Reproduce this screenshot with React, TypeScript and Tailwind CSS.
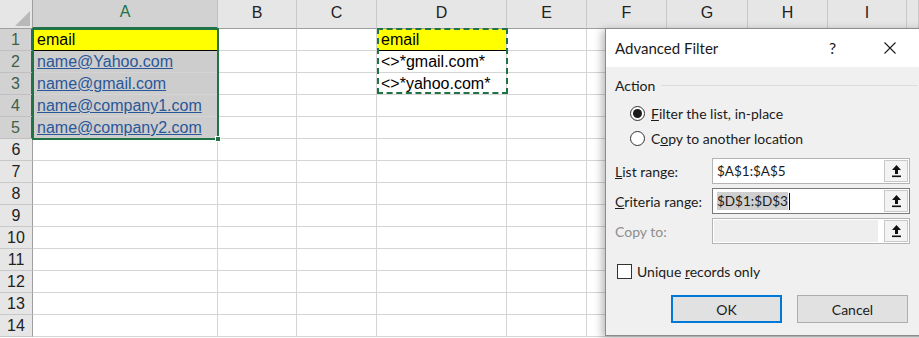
import React from "react";

const columns = [
  { name: "A", w: 185 },
  { name: "B", w: 79 },
  { name: "C", w: 80 },
  { name: "D", w: 130 },
  { name: "E", w: 80 },
  { name: "F", w: 80 },
  { name: "G", w: 81 },
  { name: "H", w: 80 },
  { name: "I", w: 79 },
  { name: "", w: 12 },
];

const rows = Array.from({ length: 14 }, (_, i) => i + 1);

type Cell = { text: string; link?: boolean; yellow?: boolean };

const cells: Record<string, Cell> = {
  A1: { text: "email", yellow: true },
  A2: { text: "name@Yahoo.com", link: true },
  A3: { text: "name@gmail.com", link: true },
  A4: { text: "name@company1.com", link: true },
  A5: { text: "name@company2.com", link: true },
  D1: { text: "email", yellow: true },
  D2: { text: "<>*gmail.com*" },
  D3: { text: "<>*yahoo.com*" },
};

function UpArrow() {
  return (
    <svg width="11" height="14" viewBox="0 0 11 14">
      <path d="M5.5 1 L10 6 L7 6 L7 10 L4 10 L4 6 L1 6 Z" fill="#111" />
      <rect x="1" y="11.5" width="9" height="1.6" fill="#111" />
    </svg>
  );
}

function RangeField({
  value,
  selected,
  disabled,
  dark,
}: {
  value?: string;
  selected?: boolean;
  disabled?: boolean;
  dark?: boolean;
}) {
  return (
    <div
      className={
        "flex h-[26px] w-[198px] border bg-white " +
        (dark ? "border-[#7a7a7a]" : "border-[#b4b4b4]")
      }
    >
      <div
        className={
          "flex flex-1 items-center pl-[4px] text-[13.5px] text-[#1b1b1b] " +
          (disabled ? "m-[1px] mr-[5px] bg-[#eeeeee]" : "")
        }
      >
        {selected ? (
          <>
            <span className="bg-[#cfcfcf] leading-[18px]">{value}</span>
            <span className="ml-[1px] h-[17px] w-px bg-black" />
          </>
        ) : (
          value
        )}
      </div>
      <div className="m-px flex w-[24px] items-center justify-center border border-[#c9c9c9] bg-[#f3f3f3]">
        <UpArrow />
      </div>
    </div>
  );
}

function AdvancedFilter() {
  return (
    <div
      className="absolute left-[605px] top-[28px] h-[308px] w-[330px] border border-[#8c8c8c] bg-[#f0f0f0] shadow-[-3px_2px_8px_rgba(0,0,0,0.28)]"
      style={{ fontFamily: '"Segoe UI", Lato, "Noto Sans", sans-serif' }}
    >
      <div className="flex h-[38px] items-center bg-white pl-[9px] text-[#1b1b1b]">
        <span className="w-[214px] text-[15px]">Advanced Filter</span>
        <span className="w-[55px] text-[16px]">?</span>
        <svg width="12" height="12" viewBox="0 0 12 12">
          <path d="M0.5 0.5 L11.5 11.5 M11.5 0.5 L0.5 11.5" stroke="#1b1b1b" strokeWidth="1.1" />
        </svg>
      </div>

      <div className="flex flex-col pl-[9px] text-[14px] text-[#1b1b1b]">
        <div className="mt-[8px] flex h-[20px] items-center pr-[16px]">
          <span>Action</span>
          <div className="ml-[6px] h-px flex-1 bg-[#dcdcdc]" />
        </div>

        <div className="mt-[8px] flex h-[20px] items-center pl-[15px]">
          <span className="flex h-[15px] w-[15px] items-center justify-center rounded-full border border-[#333] bg-white">
            <span className="h-[9px] w-[9px] rounded-full bg-[#1b1b1b]" />
          </span>
          <span className="ml-[6px]">
            <span className="underline">F</span>ilter the list, in-place
          </span>
        </div>

        <div className="mt-[5px] flex h-[20px] items-center pl-[15px]">
          <span className="h-[15px] w-[15px] rounded-full border border-[#333] bg-white" />
          <span className="ml-[6px]">
            C<span className="underline">o</span>py to another location
          </span>
        </div>

        <div className="mt-[10px] flex flex-col gap-[4px]">
          <div className="flex items-center">
            <span className="w-[97px]">
              <span className="underline">L</span>ist range:
            </span>
            <RangeField value="$A$1:$A$5" />
          </div>
          <div className="flex items-center">
            <span className="w-[97px]">
              <span className="underline">C</span>riteria range:
            </span>
            <RangeField value="$D$1:$D$3" selected dark />
          </div>
          <div className="flex items-center">
            <span className="w-[97px] text-[#8d8d8d]">Copy to:</span>
            <RangeField disabled />
          </div>
        </div>

        <div className="mt-[17px] flex h-[20px] items-center pl-[2px]">
          <span className="h-[15px] w-[15px] border border-[#333] bg-white" />
          <span className="ml-[5px]">
            Unique <span className="underline">r</span>ecords only
          </span>
        </div>

        <div className="mt-[14px] flex gap-[15px] pl-[56px]">
          <div className="flex h-[28px] w-[111px] items-center justify-center border-2 border-[#0078d7] bg-[#e1e1e1]">
            OK
          </div>
          <div className="flex h-[28px] w-[111px] items-center justify-center border border-[#adadad] bg-[#e1e1e1]">
            Cancel
          </div>
        </div>
      </div>
    </div>
  );
}

export default function App() {
  const gridCols = "grid-cols-[33px_185px_79px_80px_130px_80px_80px_81px_80px_79px_12px]";

  return (
    <div
      className="relative h-[338px] w-[919px] overflow-hidden bg-white"
      style={{ fontFamily: '"Liberation Sans", Arial, sans-serif' }}
    >
      <div className={"grid grid-rows-[29px_repeat(14,22px)] " + gridCols}>
        {/* corner */}
        <div className="relative border-b border-r border-[#9f9f9f] bg-[#e6e6e6]">
          <svg className="absolute bottom-[2px] right-[2px]" width="15" height="15" viewBox="0 0 15 15">
            <path d="M15 0 L15 15 L0 15 Z" fill="#b9b9b9" />
          </svg>
        </div>

        {/* column headers */}
        {columns.map((c, i) => {
          const active = c.name === "A";
          return (
            <div
              key={i}
              className={
                "flex items-end justify-center pb-[3px] text-[16px] " +
                (active
                  ? "border-b-2 border-r border-b-[#217346] border-r-[#c0c0c0] bg-[#d2d2d2] text-[#217346]"
                  : "border-b border-r border-b-[#9f9f9f] border-r-[#c8c8c8] bg-[#e6e6e6] text-[#222]")
              }
            >
              {c.name}
            </div>
          );
        })}

        {rows.map((r) => (
          <React.Fragment key={r}>
            <div
              className={
                "flex items-center justify-center text-[16px] " +
                (r <= 5
                  ? "border-b border-r-2 border-b-[#c0c0c0] border-r-[#217346] bg-[#d2d2d2] text-[#3f5f4c]"
                  : "border-b border-r border-b-[#c8c8c8] border-r-[#9f9f9f] bg-[#e6e6e6] text-[#222]")
              }
            >
              {r}
            </div>
            {columns.map((c, i) => {
              const key = c.name + r;
              const cell = c.name ? cells[key] : undefined;
              const selected = c.name === "A" && r >= 2 && r <= 5;
              return (
                <div
                  key={i}
                  className={
                    "overflow-visible whitespace-nowrap border-r border-[#d4d4d4] pl-[4px] text-[16px] leading-[22px] " +
                    (cell?.yellow ? "border-b border-b-black bg-[#ffff00] text-black " : "border-b ") +
                    (selected ? "bg-[#cdcdcd] " : "")
                  }
                >
                  {cell ? (
                    <span className={cell.link ? "text-[#2a579a] underline" : "text-black"}>{cell.text}</span>
                  ) : null}
                </div>
              );
            })}
          </React.Fragment>
        ))}
      </div>

      {/* selection outline A1:A5 */}
      <div className="pointer-events-none absolute left-[32px] top-[28px] h-[112px] w-[187px] border-2 border-[#217346]" />
      <div className="pointer-events-none absolute left-[215px] top-[136px] h-[6px] w-[6px] border border-white bg-[#217346]" />

      {/* copy marquee D1:D3 */}
      <div className="pointer-events-none absolute left-[377px] top-[28px] h-[66px] w-[131px] border-2 border-dashed border-[#217346]" />

      <AdvancedFilter />
    </div>
  );
}
